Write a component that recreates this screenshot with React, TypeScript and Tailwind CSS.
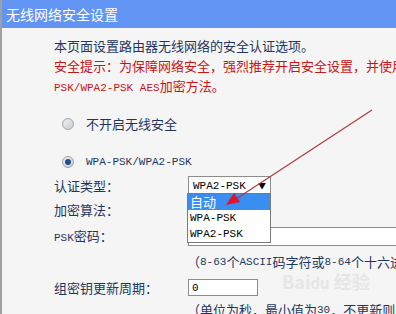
import React from "react";

const cjk = "font-['Noto_Sans_CJK_SC','Noto_Sans',sans-serif]";
const mono = "font-['Liberation_Mono','Noto_Sans_CJK_SC',monospace]";

const Radio = ({ checked }: { checked?: boolean }) => (
  <span className="ml-[8px] mr-[12px] flex size-[12px] items-center justify-center rounded-full border border-[#9aa3ad] bg-gradient-to-br from-[#f0f0f0] to-[#c9ced4]">
    {checked && <span className="size-[6px] rounded-full bg-[#1f4f8f]" />}
  </span>
);

const App = () => {
  return (
    <div className={`relative h-[314px] w-[396px] overflow-hidden border-l-2 border-[#a0a0a0] bg-[#f5f5f5] text-[13px] text-[#1f3560] ${cjk}`}>
      <div className="h-[28px] bg-[#6294f4] pl-[4px] text-[14px] leading-[28px] text-white">
        无线网络安全设置
      </div>

      <div className="pl-[52px] pt-[8px] leading-[20px]">
        <p className="whitespace-nowrap">本页面设置路由器无线网络的安全认证选项。</p>
        <p className="whitespace-nowrap text-[#c81414]">安全提示：为保障网络安全，强烈推荐开启安全设置，并使用</p>
        <p className="whitespace-nowrap text-[#c81414]">
          <span className={`${mono} text-[11px]`}>PSK/WPA2-PSK AES</span>加密方法。
        </p>

        <div className="mt-[16px] flex h-[20px] items-center">
          <Radio />
          不开启无线安全
        </div>
        <div className="mt-[18px] flex h-[20px] items-center">
          <Radio checked />
          <span className={`${mono} text-[11px]`}>WPA-PSK/WPA2-PSK</span>
        </div>

        <div className="mt-[4px] flex h-[19px] items-center">
          <span className="w-[134px]">认证类型：</span>
          <div className="flex h-[19px] w-[83px] items-center justify-between border border-[#8c8c8c] bg-white px-[4px] text-black">
            <span className={`${mono} text-[11px]`}>WPA2-PSK</span>
            <span className="text-[8px]">▼</span>
          </div>
        </div>
        <div className="mt-[5px] flex h-[20px] items-center">
          <span className="w-[134px]">加密算法：</span>
        </div>
        <div className="mt-[7px] flex h-[19px] items-center">
          <span className="w-[134px] shrink-0">
            <span className={`${mono} text-[11px]`}>PSK</span>密码：
          </span>
          <div className="h-[19px] w-[260px] shrink-0 border border-[#8c8c8c] bg-white" />
        </div>
        <div className="mt-[6px] flex h-[20px] items-center whitespace-nowrap pl-[133px]">
          （<span className={`${mono} text-[11px]`}>8-63</span>个<span className={`${mono} text-[11px]`}>ASCII</span>码字符或<span className={`${mono} text-[11px]`}>8-64</span>个十六进制字符）
        </div>
        <div className="mt-[7px] flex h-[17px] items-center">
          <span className="w-[134px]">组密钥更新周期：</span>
          <div className="flex h-[17px] w-[70px] items-center border border-[#8c8c8c] bg-white px-[3px] text-black">
            <span className={`${mono} text-[11px]`}>0</span>
          </div>
        </div>
        <div className="mt-[4px] flex h-[20px] items-center whitespace-nowrap pl-[133px]">
          （单位为秒，最小值为<span className={`${mono} text-[11px]`}>30</span>，不更新则为<span className={`${mono} text-[11px]`}>0</span>）
        </div>
      </div>

      {/* open dropdown list */}
      <div className="absolute left-[185px] top-[193px] w-[84px] border border-[#7a7a7a] bg-white text-black">
        <div className="h-[16px] bg-[#3a8ef0] pl-[2px] text-[13px] leading-[16px] text-white">自动</div>
        <div className={`h-[16px] pl-[2px] text-[11px] leading-[16px] ${mono}`}>WPA-PSK</div>
        <div className={`h-[16px] pl-[2px] text-[11px] leading-[16px] ${mono}`}>WPA2-PSK</div>
      </div>

      {/* watermark */}
      <div className="absolute left-[280px] top-[272px] text-[18px] font-bold leading-none text-[#e6e6e6]">
        Bai<span className="text-[15px]">du</span> 经验
      </div>

      {/* red annotation arrow */}
      <svg className="absolute left-0 top-0" width="396" height="314" viewBox="0 0 396 314">
        <line x1="370" y1="110" x2="234" y2="199" stroke="#b03a3a" strokeWidth="1.2" />
        <polygon points="224,205 232,193 238,202" fill="#e0142c" />
      </svg>
    </div>
  );
};

export default App;
